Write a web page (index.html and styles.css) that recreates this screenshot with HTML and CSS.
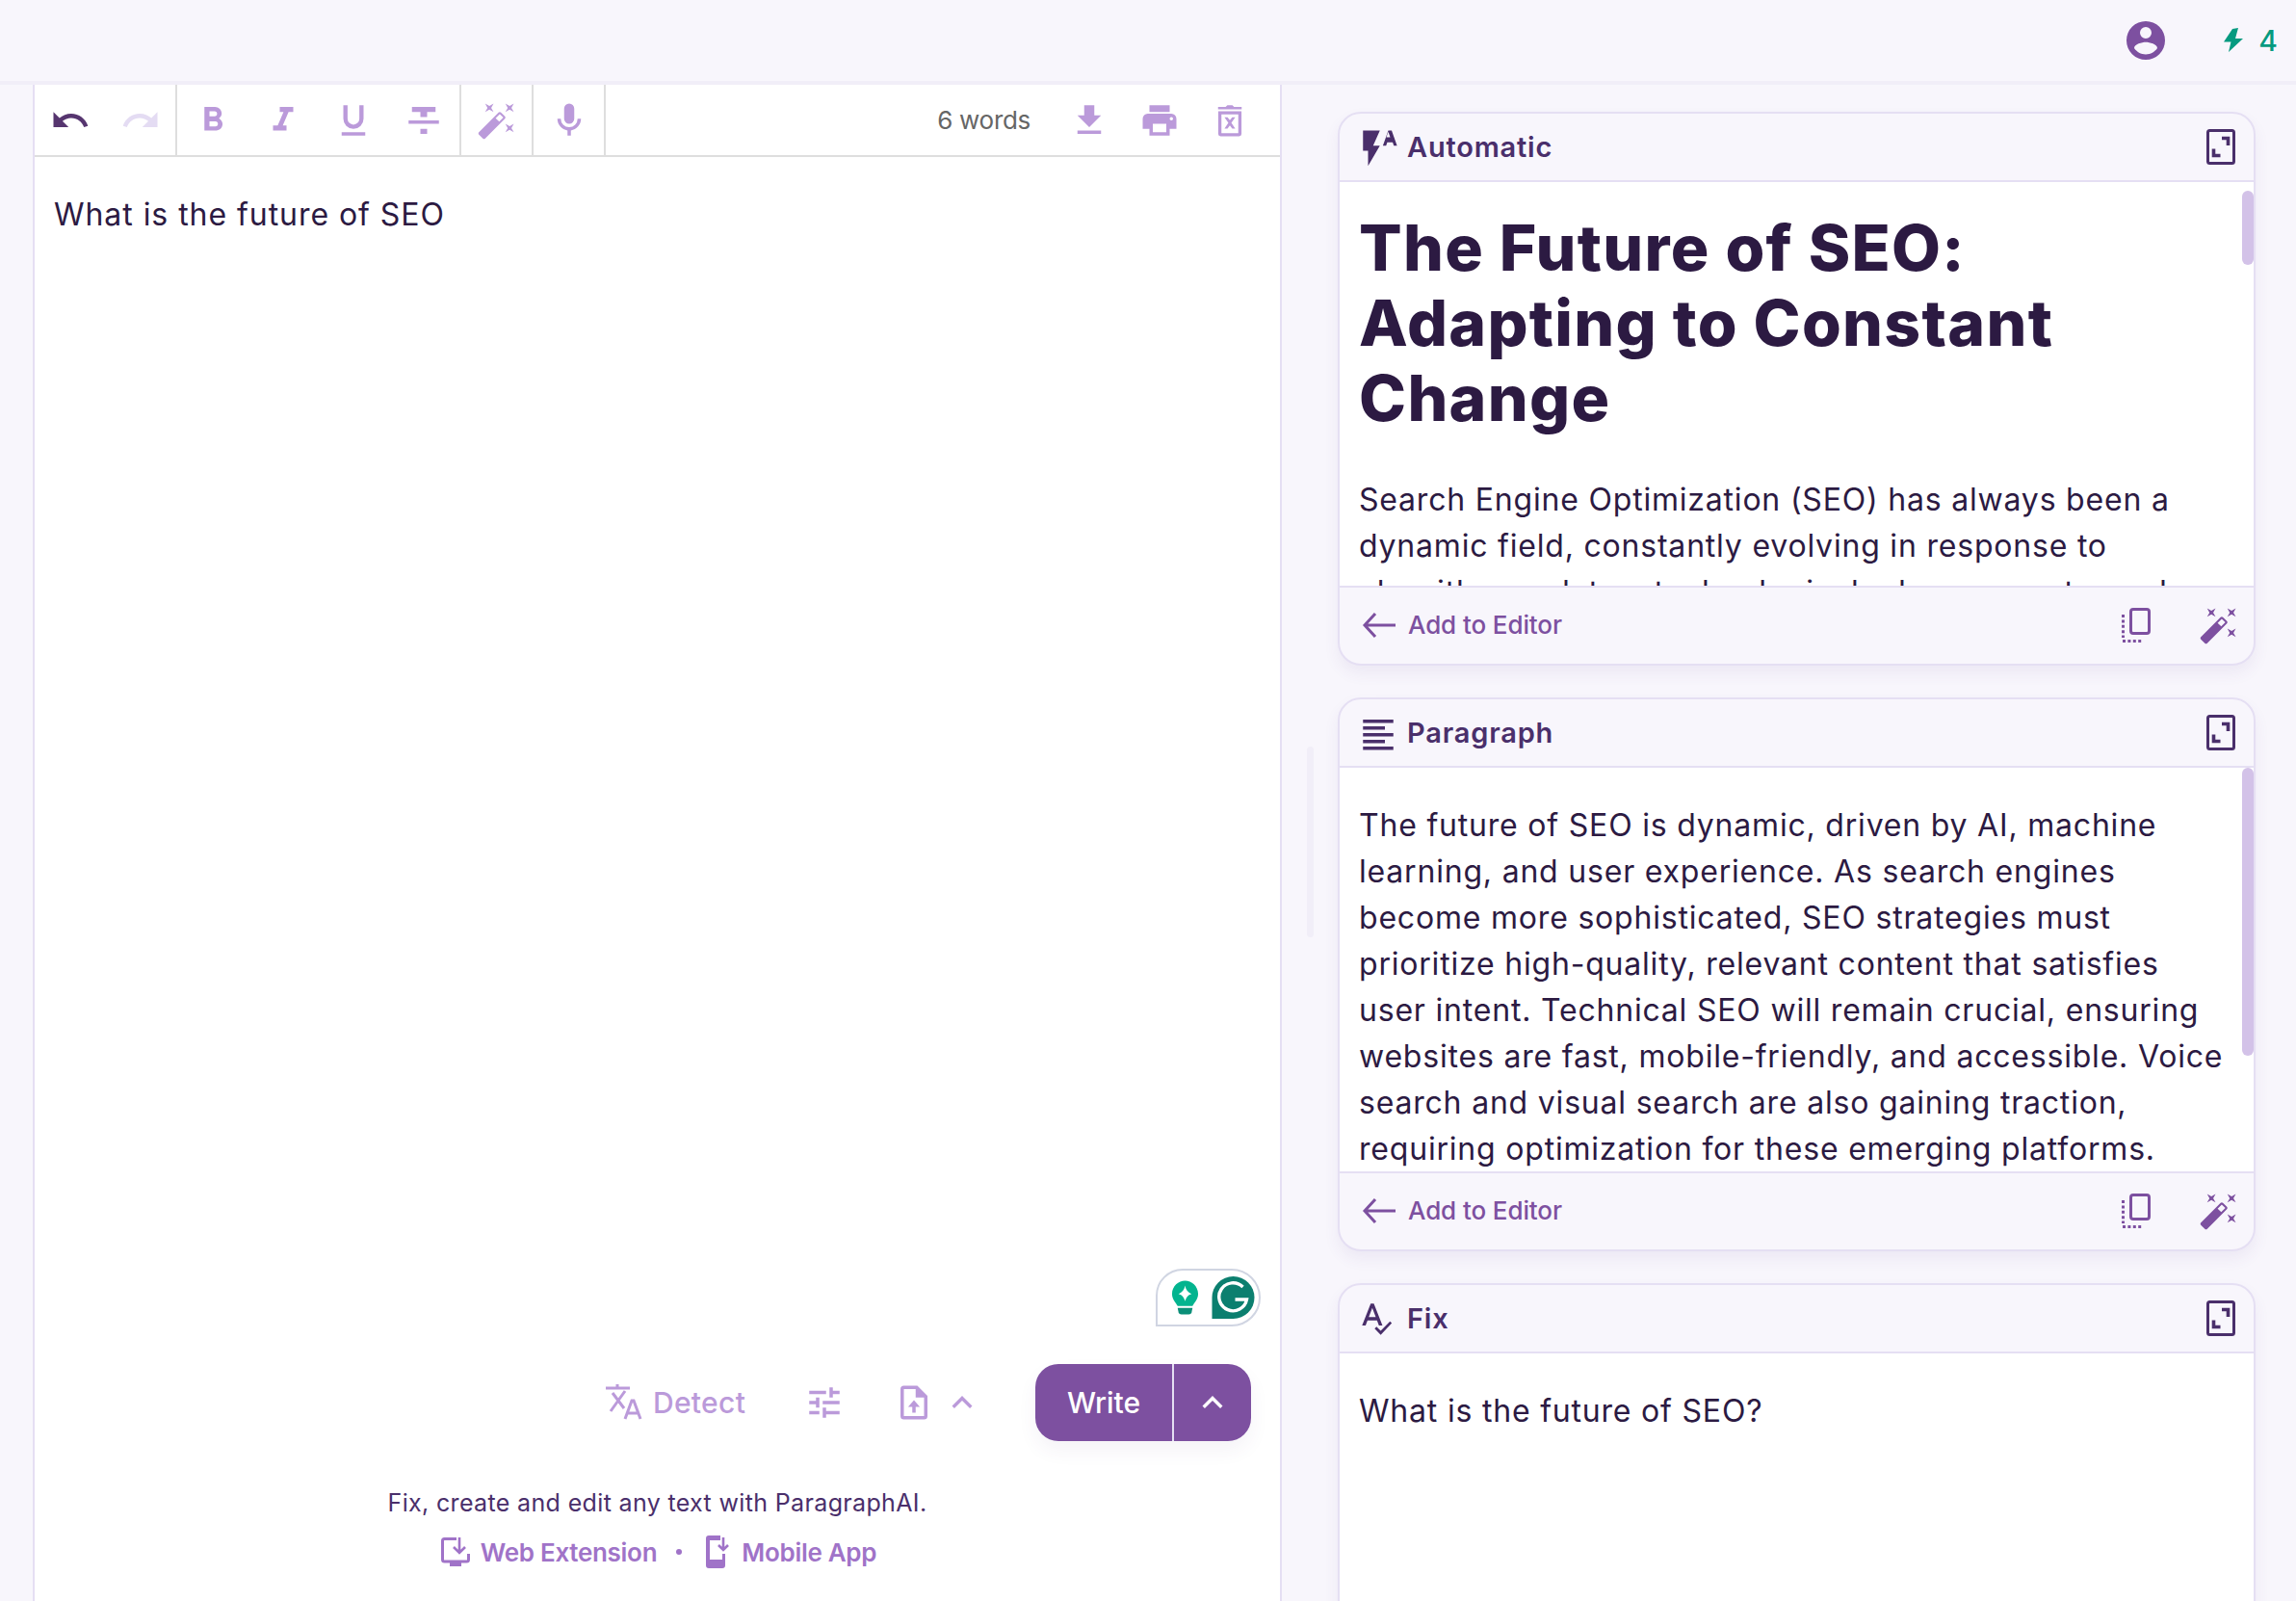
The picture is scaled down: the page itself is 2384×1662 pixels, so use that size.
FILE: index.html
```html
<!DOCTYPE html>
<html lang="en">
<head>
<meta charset="utf-8">
<title>ParagraphAI</title>
<link rel="stylesheet" href="styles.css">
</head>
<body>
<svg class="defs" xmlns="http://www.w3.org/2000/svg">
  <symbol id="i-wand" viewBox="0 0 24 24"><path d="M7.5,5.6L5,7L6.4,4.5L5,2L7.5,3.4L10,2L8.6,4.5L10,7L7.5,5.6M19.5,15.4L22,14L20.6,16.5L22,19L19.5,17.6L17,19L18.4,16.5L17,14L19.5,15.4M22,2L20.6,4.5L22,7L19.5,5.6L17,7L18.4,4.5L17,2L19.5,3.4L22,2M13.34,12.78L15.78,10.34L13.66,8.22L11.22,10.66L13.34,12.78M14.37,7.29L16.71,9.63C17.1,10 17.1,10.65 16.71,11.04L5.04,22.71C4.65,23.1 4,23.1 3.63,22.71L1.29,20.37C0.9,20 0.9,19.35 1.29,18.96L12.96,7.29C13.35,6.9 14,6.9 14.37,7.29Z"/></symbol>
  <symbol id="i-expand" viewBox="0 0 30 37"><rect x="1.5" y="1.5" width="27" height="34" rx="2" fill="none" stroke="currentColor" stroke-width="3"/><path d="M16 9.5H22.5V17M7.5 20.5V27.5H14.5" fill="none" stroke="currentColor" stroke-width="3.6"/></symbol>
  <symbol id="i-arrow" viewBox="0 0 36 28"><path d="M35 14H3M14 2L3 14L14 26" fill="none" stroke="currentColor" stroke-width="3"/></symbol>
  <symbol id="i-copy" viewBox="0 0 30 36"><rect x="9.5" y="1.5" width="19" height="25" rx="2.5" fill="none" stroke="currentColor" stroke-width="3"/><path d="M1.5 7V31M1 34.5H21" fill="none" stroke="currentColor" stroke-width="3" stroke-dasharray="3 2.4"/></symbol>
  <symbol id="i-chev" viewBox="0 0 24 24"><path d="M7.41,15.41L12,10.83L16.59,15.41L18,14L12,8L6,14L7.41,15.41Z"/></symbol>
</svg>

<header class="topbar">
  <svg class="icon avatar" viewBox="0 0 24 24"><path d="M12,19.2C9.5,19.2 7.29,17.92 6,16C6.03,14 10,12.9 12,12.9C14,12.9 17.97,14 18,16C16.71,17.92 14.5,19.2 12,19.2M12,5A3,3 0 0,1 15,8A3,3 0 0,1 12,11A3,3 0 0,1 9,8A3,3 0 0,1 12,5M12,2A10,10 0 0,0 2,12A10,10 0 0,0 12,22A10,10 0 0,0 22,12A10,10 0 0,0 12,2Z"/></svg>
  <svg class="credit-bolt" viewBox="0 0 20 26"><path d="M9 1L15 0L12 11H20L5 25L7.5 14.5H0Z"/></svg>
  <span class="credit-num">4</span>
</header>

<main class="main">
  <section class="editor">
    <div class="toolbar">
      <div class="tool-group">
        <button class="tool tool-dark"><svg class="icon" viewBox="0 0 24 24"><path d="M12.5,8C9.85,8 7.45,9 5.6,10.6L2,7V16H11L7.38,12.38C8.77,11.22 10.54,10.5 12.5,10.5C16.04,10.5 19.05,12.81 20.1,16L22.47,15.22C21.08,11.03 17.15,8 12.5,8Z"/></svg></button>
        <button class="tool tool-off"><svg class="icon" viewBox="0 0 24 24"><path d="M18.4,10.6C16.55,9 14.15,8 11.5,8C6.85,8 2.92,11.03 1.54,15.22L3.9,16C4.95,12.81 7.95,10.5 11.5,10.5C13.45,10.5 15.23,11.22 16.62,12.38L13,16H22V7L18.4,10.6Z"/></svg></button>
      </div>
      <div class="tool-group tool-group-format">
        <button class="tool"><svg class="icon" viewBox="0 0 24 24"><path d="M13.5,15.5H10V12.5H13.5A1.5,1.5 0 0,1 15,14A1.5,1.5 0 0,1 13.5,15.5M10,6.5H13A1.5,1.5 0 0,1 14.5,8A1.5,1.5 0 0,1 13,9.5H10M15.6,10.79C16.57,10.11 17.25,9 17.25,8C17.25,5.74 15.5,4 13.25,4H7V18H14.04C16.14,18 17.75,16.3 17.75,14.21C17.75,12.69 16.89,11.39 15.6,10.79Z"/></svg></button>
        <button class="tool"><svg class="icon" viewBox="0 0 24 24"><path d="M10,4V7H12.21L8.79,15H6V18H14V15H11.79L15.21,7H18V4H10Z"/></svg></button>
        <button class="tool"><svg class="icon" viewBox="0 0 24 24"><path d="M5,21H19V19H5V21M12,17A6,6 0 0,0 18,11V3H15.5V11A3.5,3.5 0 0,1 12,14.5A3.5,3.5 0 0,1 8.5,11V3H6V11A6,6 0 0,0 12,17Z"/></svg></button>
        <button class="tool"><svg class="icon" viewBox="0 0 24 24"><path d="M10 20h4v-3h-4v3zM5 4v3h5v3h4V7h5V4H5zM3 14h18v-2H3v2z"/></svg></button>
      </div>
      <div class="tool-group">
        <button class="tool"><svg class="icon"><use href="#i-wand"/></svg></button>
      </div>
      <div class="tool-group">
        <button class="tool"><svg class="icon" viewBox="0 0 24 24"><path d="M12,2A3,3 0 0,1 15,5V11A3,3 0 0,1 12,14A3,3 0 0,1 9,11V5A3,3 0 0,1 12,2M19,11C19,14.53 16.39,17.44 13,17.93V21H11V17.93C7.61,17.44 5,14.53 5,11H7A5,5 0 0,0 12,16A5,5 0 0,0 17,11H19Z"/></svg></button>
      </div>
      <span class="word-count">6 words</span>
      <button class="tool"><svg class="icon" viewBox="0 0 24 24"><path d="M5,20H19V18H5M19,9H15V3H9V9H5L12,16L19,9Z"/></svg></button>
      <button class="tool"><svg class="icon" viewBox="0 0 24 24"><path d="M18,3H6V7H18M19,12A1,1 0 0,1 18,11A1,1 0 0,1 19,10A1,1 0 0,1 20,11A1,1 0 0,1 19,12M16,19H8V14H16M19,8H5A3,3 0 0,0 2,11V17H6V21H18V17H22V11A3,3 0 0,0 19,8Z"/></svg></button>
      <button class="tool"><svg class="icon" viewBox="0 0 24 24"><path fill-rule="evenodd" d="M5,4H9.5L10.5,3H13.5L14.5,4H19V5.4H5ZM5.1,6.6H18.9V20A1.4,1.4 0 0,1 17.5,21.4H6.5A1.4,1.4 0 0,1 5.1,20ZM7,8.4V19.6H17V8.4ZM8.8,10.2H10.6L12,11.9L13.4,10.2H15.2L12.9,13.4L15.2,16.8H13.4L12,15L10.6,16.8H8.8L11.1,13.4Z"/></svg></button>
    </div>

    <div class="editor-text">
      <p class="editor-line">What is the future of SEO</p>
      <div class="grammarly">
        <svg class="g-bulb" viewBox="0 0 30 36"><path d="M15 0C22 0 29 6 29 14C29 20 25 23 23 27H7C5 23 1 20 1 14C1 6 8 0 15 0Z" fill="#03b48f"/><path d="M7 29H23L22 34Q21.5 36 19 36H11Q8.5 36 8 34Z" fill="#0b8f78"/><path d="M15 5C16 10 18 12 22 14C18 15 16 18 15 22C14 18 12 15 8 14C12 12 14 10 15 5Z" fill="#fff"/></svg>
        <svg class="g-logo" viewBox="0 0 44 44"><path d="M22 0A22 22 0 0 1 22 44H0V22A22 22 0 0 1 22 0Z" fill="#0b7f6f"/><path d="M32 11A14.5 14.5 0 1 0 36 24H24" fill="none" stroke="#fff" stroke-width="3.4"/></svg>
      </div>
    </div>

    <div class="controls">
      <button class="ctl ctl-detect">
        <svg class="icon" viewBox="0 0 42 42"><path d="M3 6H28M15 2V6M10 11L22 27M23 9L8 30M23 38L30 19H32L39 38M26 32H36" fill="none" stroke="currentColor" stroke-width="3"/></svg>
        <span>Detect</span>
      </button>
      <button class="ctl ctl-tune"><svg class="icon" viewBox="0 0 24 24"><path d="M3,17V19H9V17H3M3,5V7H13V5H3M13,21V19H21V17H13V15H11V21H13M7,9V11H3V13H7V15H9V9H7M21,13V11H11V13H21M15,9H17V7H21V5H17V3H15V9Z"/></svg></button>
      <button class="ctl ctl-file"><svg class="icon" viewBox="0 0 24 24"><path fill-rule="evenodd" d="M6,2H14L20,8V20A2,2 0 0,1 18,22H6A2,2 0 0,1 4,20V4A2,2 0 0,1 6,2ZM6,4V20H18V9H13V4ZM12,10.5L15.5,14.5H13V18H11V14.5H8.5Z"/></svg></button>
      <button class="ctl ctl-chev"><svg class="icon"><use href="#i-chev"/></svg></button>
      <div class="write">
        <button class="write-main">Write</button>
        <button class="write-more"><svg class="icon"><use href="#i-chev"/></svg></button>
      </div>
    </div>

    <footer class="promo">
      <p class="promo-text">Fix, create and edit any text with ParagraphAI.</p>
      <div class="promo-links">
        <a class="promo-link" href="#">
          <svg class="promo-ico-web" viewBox="0 0 30 32"><path d="M16 2.5H3.5Q1.5 2.5 1.5 4.5V24Q1.5 26 3.5 26H26.5Q28.5 26 28.5 24V18" fill="none" stroke="currentColor" stroke-width="3"/><path d="M9 26H21V31H9Z"/><path d="M19 1V16M13 11L19 17L25 11" fill="none" stroke="currentColor" stroke-width="2.6"/></svg>
          Web Extension
        </a>
        <span class="promo-dot"></span>
        <a class="promo-link" href="#">
          <svg class="promo-ico-app" viewBox="0 0 26 34"><path fill-rule="evenodd" d="M3 0H15V5H4V25H17V19H20V31Q20 34 17 34H3Q0 34 0 31V3Q0 0 3 0Z"/><path d="M18 2V15M13 10L18 15L23 10" fill="none" stroke="currentColor" stroke-width="2.6"/></svg>
          Mobile App
        </a>
      </div>
    </footer>
  </section>

  <div class="gutter-thumb"></div>

  <aside class="results">
    <article class="card">
      <header class="card-head">
        <svg class="icon" viewBox="0 0 24 24"><path d="M16.85,6H19.15L18,2.75M20,2L23.2,11H21.3L20.6,9H17.4L16.7,11H14.8L18,2H20M3,2V14H6V23L13,11H9L13,2H3Z"/></svg>
        <h2 class="card-title">Automatic</h2>
        <svg class="expand"><use href="#i-expand"/></svg>
      </header>
      <div class="card-body card-body-a">
        <div class="thumb thumb-a"></div>
        <h1 class="article-title">The Future of SEO:<br>Adapting to Constant<br>Change</h1>
        <p class="article-text">Search Engine Optimization (SEO) has always been a<br>dynamic field, constantly evolving in response to<br>algorithm updates, technological advancements, and</p>
      </div>
      <footer class="card-foot">
        <svg class="arrow"><use href="#i-arrow"/></svg>
        <span class="add-label">Add to Editor</span>
        <svg class="copy"><use href="#i-copy"/></svg>
        <svg class="icon foot-wand"><use href="#i-wand"/></svg>
      </footer>
    </article>

    <article class="card">
      <header class="card-head">
        <svg class="icon" viewBox="0 0 24 24"><path d="M3,4H21V6H3ZM3,8H16V10H3ZM3,12H21V14H3ZM3,16H16V18H3ZM3,20H21V22H3Z"/></svg>
        <h2 class="card-title">Paragraph</h2>
        <svg class="expand"><use href="#i-expand"/></svg>
      </header>
      <div class="card-body card-body-b">
        <div class="thumb thumb-b"></div>
        <p class="article-text">The future of SEO is dynamic, driven by AI, machine<br>learning, and user experience. As search engines<br>become more sophisticated, SEO strategies must<br>prioritize high-quality, relevant content that satisfies<br>user intent. Technical SEO will remain crucial, ensuring<br>websites are fast, mobile-friendly, and accessible. Voice<br>search and visual search are also gaining traction,<br>requiring optimization for these emerging platforms.</p>
      </div>
      <footer class="card-foot">
        <svg class="arrow"><use href="#i-arrow"/></svg>
        <span class="add-label">Add to Editor</span>
        <svg class="copy"><use href="#i-copy"/></svg>
        <svg class="icon foot-wand"><use href="#i-wand"/></svg>
      </footer>
    </article>

    <article class="card">
      <header class="card-head">
        <svg class="icon" viewBox="0 0 24 24"><path d="M19,13.5L13.5,19.2L11,16.7L9.9,17.8L13.5,21.5L20.1,14.6ZM6.43,11L8.5,5.5L10.57,11M12.45,16H14.54L9.43,3H7.57L2.46,16H4.55L5.67,13H11.31L12.45,16Z"/></svg>
        <h2 class="card-title">Fix</h2>
        <svg class="expand"><use href="#i-expand"/></svg>
      </header>
      <div class="card-body card-body-c">
        <p class="article-text">What is the future of SEO?</p>
      </div>
    </article>
  </aside>
</main>
</body>
</html>
```

FILE: styles.css
```css
* { box-sizing: border-box; }

html, body { margin: 0; padding: 0; }

body {
  width: 2384px;
  height: 1662px;
  overflow: hidden;
  background: #f8f6fc;
  font-family: "Inter", "Liberation Sans", sans-serif;
  color: #2c1a42;
}

p, h1, h2 { margin: 0; }

button {
  border: 0;
  padding: 0;
  background: none;
  font: inherit;
  color: inherit;
}

.defs { display: none; }

.icon {
  display: block;
  width: 42px;
  height: 42px;
  fill: currentColor;
  flex: none;
}

/* Top bar */
.topbar {
  height: 88px;
  border-bottom: 4px solid #f1eef8;
  display: flex;
  align-items: center;
  padding-right: 19px;
  justify-content: flex-end;
}

.avatar { width: 48px; height: 48px; color: #7d50a0; }

.credit-bolt { width: 20px; height: 26px; margin-left: 57px; fill: #069a80; }

.credit-num {
  margin-left: 16px;
  font-size: 30px;
  line-height: 40px;
  color: #069a80;
  font-weight: 500;
}

/* Main layout */
.main {
  position: relative;
  display: flex;
  height: 1574px;
  padding-left: 34px;
}

.gutter-thumb {
  position: absolute;
  left: 1357px;
  top: 687px;
  width: 7px;
  height: 198px;
  border-radius: 4px;
  background: #f1eef8;
}

/* Editor */
.editor {
  width: 1297px;
  flex: none;
  display: flex;
  flex-direction: column;
  background: #fff;
  border-left: 2px solid #e5dff3;
  border-right: 2px solid #e5dff3;
}

.toolbar {
  height: 75px;
  flex: none;
  display: flex;
  align-items: stretch;
  padding-right: 16px;
  border-bottom: 2px solid #dedede;
  color: #bb9ada;
}

.tool-group {
  display: flex;
  border-right: 2px solid #dedede;
}

.tool-group-format { padding-right: 1px; }

.tool {
  width: 73px;
  display: flex;
  align-items: center;
  justify-content: center;
  color: #bb9ada;
}

.tool-dark { color: #56356f; }
.tool-off { color: #e4dcf3; }

.word-count {
  margin-left: auto;
  margin-right: 24px;
  align-self: center;
  font-size: 26px;
  letter-spacing: -0.3px;
  color: #666;
}

.editor-text {
  position: relative;
  flex: 1;
  padding: 36px 20px;
}

.editor-line {
  font-size: 32px;
  line-height: 48px;
  letter-spacing: 0.95px;
}

.grammarly {
  position: absolute;
  right: 20px;
  bottom: 39px;
  width: 109px;
  height: 60px;
  display: flex;
  align-items: center;
  gap: 13px;
  padding-left: 14px;
  background: #fff;
  border: 2px solid #d0d5e2;
  border-radius: 28px 30px 30px 0;
}

.g-bulb { width: 29px; height: 36px; }
.g-logo { width: 45px; height: 44px; }

.controls {
  height: 80px;
  flex: none;
  display: flex;
  align-items: center;
  padding-right: 30px;
  padding-left: 590px;
  color: #bb9ada;
}

.ctl { display: flex; align-items: center; color: #bb9ada; }

.ctl-detect {
  gap: 10px;
  font-size: 30px;
  font-weight: 500;
  letter-spacing: 0.3px;
}

.ctl-tune { margin-left: 61px; }
.ctl-file { margin-left: 51px; }
.ctl-chev { margin-left: 8px; }

.write {
  display: flex;
  height: 80px;
  margin-left: auto;
  border-radius: 24px;
  overflow: hidden;
  background: #7d50a0;
  box-shadow: 0 10px 20px rgba(80, 50, 120, 0.06);
}

.write-main {
  width: 144px;
  font-size: 30px;
  font-weight: 500;
  color: #fff;
  border-right: 2px solid #e5dff3;
}

.write-more {
  width: 80px;
  display: flex;
  align-items: center;
  justify-content: center;
  color: #fff;
}

.promo {
  flex: none;
  padding: 44px 0 31px;
  text-align: center;
}

.promo-text {
  font-size: 25px;
  line-height: 40px;
  letter-spacing: 0.35px;
  color: #4a2f6b;
}

.promo-links {
  display: flex;
  justify-content: center;
  align-items: center;
  height: 40px;
  margin-top: 11px;
  padding-left: 3px;
}

.promo-link {
  display: flex;
  align-items: center;
  gap: 11px;
  font-size: 26px;
  font-weight: 600;
  letter-spacing: -0.3px;
  color: #a073c8;
  text-decoration: none;
}

.promo-ico-web { width: 30px; height: 32px; fill: currentColor; }
.promo-ico-app { width: 26px; height: 34px; fill: currentColor; }

.promo-dot {
  width: 6px;
  height: 6px;
  border-radius: 50%;
  background: #a073c8;
  margin: 0 25px 0 20px;
}

/* Result cards */
.results {
  width: 953px;
  flex: none;
  margin-left: 58px;
  padding-top: 28px;
  display: flex;
  flex-direction: column;
  gap: 33px;
}

.card {
  flex: none;
  border: 2px solid #e5dff3;
  border-radius: 24px;
  background: #f8f6fc;
  box-shadow: 0 8px 16px rgba(90, 60, 140, 0.07);
  overflow: hidden;
}

.card-head {
  height: 71px;
  display: flex;
  align-items: center;
  padding: 0 19px 0 19px;
  gap: 9px;
  border-bottom: 2px solid #e5dff3;
  color: #4a2f6b;
}

.card-title {
  font-size: 29px;
  font-weight: 600;
  letter-spacing: 0.8px;
  color: #4a2f6b;
}

.expand {
  width: 30px;
  height: 37px;
  margin-left: auto;
  color: #4a2f6b;
}

.card-body {
  position: relative;
  overflow: hidden;
  background: #fff;
  padding: 36px 20px 0;
}

.card-body-a { height: 419px; padding-top: 29px; }
.card-body-b { height: 419px; }
.card-body-c { height: 500px; }

.thumb {
  position: absolute;
  right: 0;
  width: 12px;
  border-radius: 6px;
  background: #d3c2e8;
}

.thumb-a { top: 9px; height: 77px; }
.thumb-b { top: 0; height: 299px; }

.article-title {
  font-size: 66px;
  line-height: 78px;
  font-weight: 800;
  color: #2c1a42;
  letter-spacing: 1.3px;
  margin-bottom: 43px;
}

.article-text {
  font-size: 32px;
  line-height: 48px;
  letter-spacing: 0.8px;
  color: #2c1a42;
}

.card-foot {
  height: 81px;
  display: flex;
  align-items: center;
  padding: 0 15px 2px 23px;
  border-top: 2px solid #e5dff3;
  color: #7d50a0;
}

.arrow { width: 36px; height: 28px; }

.add-label {
  margin-left: 12px;
  font-size: 26px;
  font-weight: 500;
  letter-spacing: -0.1px;
  color: #7d50a0;
}

.copy {
  width: 30px;
  height: 36px;
  margin-left: auto;
}

.foot-wand { margin-left: 50px; }
```
